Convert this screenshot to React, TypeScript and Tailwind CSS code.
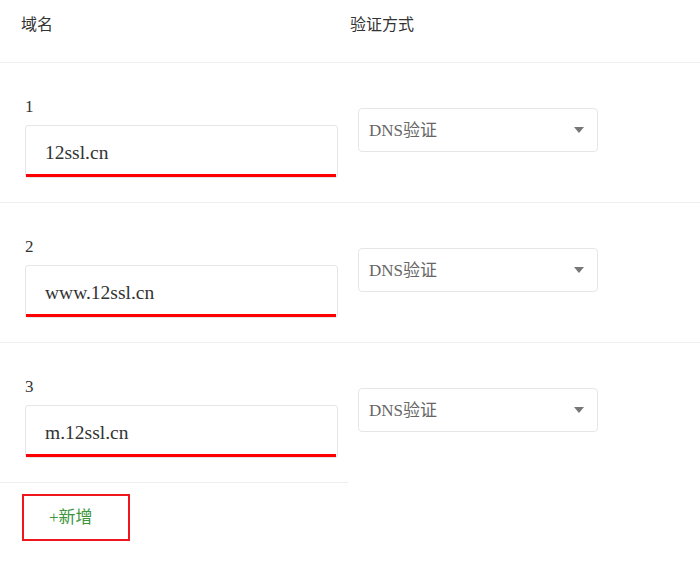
const rows = [
  { n: 1, domain: "12ssl.cn" },
  { n: 2, domain: "www.12ssl.cn" },
  { n: 3, domain: "m.12ssl.cn" },
];

function Select() {
  return (
    <div className="w-[240px] h-[44px] border border-[#e6e6e6] rounded-[4px] flex items-center justify-between pl-[10px] pr-[12px]">
      <span className="text-[17px] text-[#666] pt-[2px]">DNS验证</span>
      <svg width="10" height="6" viewBox="0 0 10 6" className="mr-[1px]">
        <path d="M0 0h10L5 6z" fill="#777" />
      </svg>
    </div>
  );
}

export default function App() {
  return (
    <div
      className="w-[700px] h-[573px] bg-white text-[#333] overflow-hidden"
      style={{ fontFamily: '"Liberation Serif", "Noto Sans CJK SC", serif' }}
    >
      <div className="h-[63px] border-b border-[#eee] flex pt-[13px] text-[16px] leading-[24px]">
        <div className="w-[350px] pl-[21px]">域名</div>
        <div>验证方式</div>
      </div>

      {rows.map((r, i) => (
        <div
          key={r.n}
          className={
            "h-[140px] flex " +
            (i < rows.length - 1 ? "border-b border-[#eee]" : "")
          }
        >
          <div
            className={
              "w-[348px] pl-[25px] pt-[34px] " +
              (i === rows.length - 1 ? "border-b border-[#eee]" : "")
            }
          >
            <div className="text-[17px] leading-[20px]">{r.n}</div>
            <div className="mt-[8px] w-[313px] h-[53px] border border-[#e6e6e6] rounded-[3px] flex flex-col">
              <div className="flex-1 flex items-center pl-[19px] pt-[5px] text-[19.5px]">
                {r.domain}
              </div>
              <div className="h-[3px] bg-[#f00] mr-[1px]" />
            </div>
          </div>
          <div className="pl-[10px] pt-[45px]">
            <Select />
          </div>
        </div>
      ))}

      <div className="pl-[22px] pt-[11px]">
        <button className="w-[108px] h-[47px] border-2 border-[#f0161e] flex items-center pl-[25px] text-[17px] text-[#3c963c]">
          +新增
        </button>
      </div>
    </div>
  );
}
